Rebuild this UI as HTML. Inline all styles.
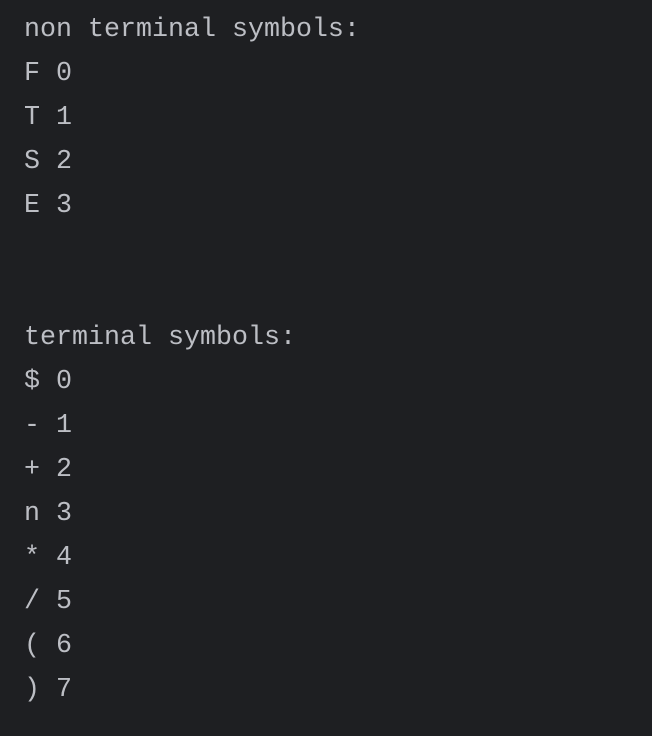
<!DOCTYPE html>
<html><head><meta charset="utf-8"><style>
html,body{margin:0;padding:0;background:#1e1f22;width:652px;height:736px;overflow:hidden}
pre{margin:0;padding:8px 0 0 24px;font-family:"Liberation Mono","DejaVu Sans Mono",monospace;font-size:26.67px;line-height:44px;color:#bcbec4}
</style></head><body><pre>non terminal symbols:
F 0
T 1
S 2
E 3


terminal symbols:
$ 0
- 1
+ 2
n 3
* 4
/ 5
( 6
) 7</pre></body></html>
